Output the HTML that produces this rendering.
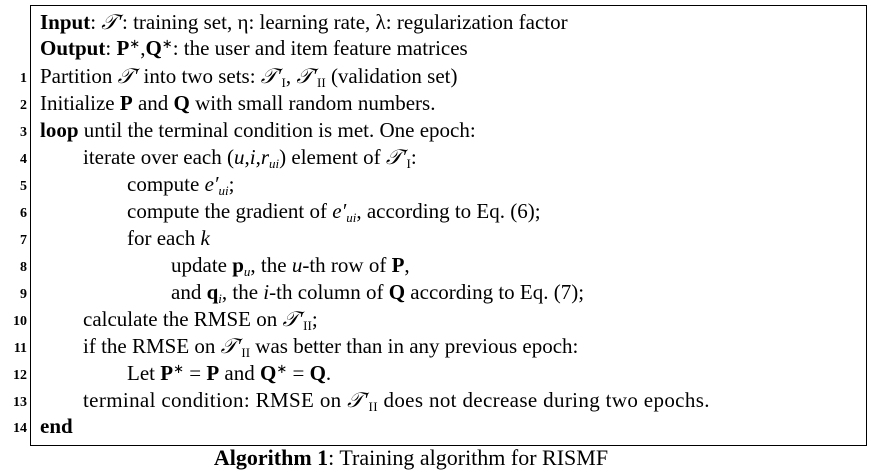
<!DOCTYPE html>
<html><head><meta charset="utf-8"><style>
body{margin:0;width:874px;height:471px;background:#fff;font-family:"Liberation Serif",serif;color:#000;position:relative;overflow:hidden}
.box{position:absolute;left:30px;top:5px;width:835px;height:439px;border:1px solid #000}
.l{position:absolute;font-size:21px;line-height:26px;white-space:nowrap}
.n{position:absolute;font-size:14px;font-weight:bold;line-height:26px;width:29px;text-align:right;margin-top:3px}
sub{font-size:13px;vertical-align:-4px;line-height:0}
sup{font-size:13px;vertical-align:7px;line-height:0}
.cap{position:absolute;left:0;width:822px;text-align:center;top:445px;font-size:22px;line-height:26px}
</style></head><body>
<div class="box"></div>
<div class="l" style="left:40px;top:9px"><b>Input</b>: <i>𝒯′</i>: training set, η: learning rate, λ: regularization factor</div>
<div class="l" style="left:40px;top:35px"><b>Output</b>: <b>P</b><sup>∗</sup>,<b>Q</b><sup>∗</sup>: the user and item feature matrices</div>
<div class="n" style="left:-2px;top:63px">1</div><div class="l" style="left:40px;top:63px">Partition <i>𝒯′</i> into two sets: <i>𝒯′</i><sub>I</sub>, <i>𝒯′</i><sub>II</sub> (validation set)</div>
<div class="n" style="left:-2px;top:90px">2</div><div class="l" style="left:40px;top:90px">Initialize <b>P</b> and <b>Q</b> with small random numbers.</div>
<div class="n" style="left:-2px;top:117px">3</div><div class="l" style="left:40px;top:117px"><b>loop</b> until the terminal condition is met. One epoch:</div>
<div class="n" style="left:-2px;top:144px">4</div><div class="l" style="left:83px;top:144px">iterate over each (<i>u</i>,<i>i</i>,<i>r<sub>ui</sub></i>) element of <i>𝒯′</i><sub>I</sub>:</div>
<div class="n" style="left:-2px;top:171px">5</div><div class="l" style="left:127px;top:171px">compute <i>e′<sub>ui</sub></i>;</div>
<div class="n" style="left:-2px;top:198px">6</div><div class="l" style="left:127px;top:198px">compute the gradient of <i>e′<sub>ui</sub></i>, according to Eq. (6);</div>
<div class="n" style="left:-2px;top:225px">7</div><div class="l" style="left:127px;top:225px">for each <i>k</i></div>
<div class="n" style="left:-2px;top:252px">8</div><div class="l" style="left:171px;top:252px">update <b>p</b><sub><i>u</i></sub>, the <i>u</i>-th row of <b>P</b>,</div>
<div class="n" style="left:-2px;top:279px">9</div><div class="l" style="left:171px;top:279px">and <b>q</b><sub><i>i</i></sub>, the <i>i</i>-th column of <b>Q</b> according to Eq. (7);</div>
<div class="n" style="left:-2px;top:306px">10</div><div class="l" style="left:83px;top:306px">calculate the RMSE on <i>𝒯′</i><sub>II</sub>;</div>
<div class="n" style="left:-2px;top:333px">11</div><div class="l" style="left:83px;top:333px">if the RMSE on <i>𝒯′</i><sub>II</sub> was better than in any previous epoch:</div>
<div class="n" style="left:-2px;top:360px">12</div><div class="l" style="left:127px;top:360px">Let <b>P</b><sup>∗</sup> = <b>P</b> and <b>Q</b><sup>∗</sup> = <b>Q</b>.</div>
<div class="n" style="left:-2px;top:387px">13</div><div class="l" style="left:83px;top:387px;letter-spacing:0.35px">terminal condition: RMSE on <i>𝒯′</i><sub>II</sub> does not decrease during two epochs.</div>
<div class="n" style="left:-2px;top:413px">14</div><div class="l" style="left:40px;top:413px"><b>end</b></div>
<div class="cap"><b>Algorithm 1</b>: Training algorithm for RISMF</div>
</body></html>
